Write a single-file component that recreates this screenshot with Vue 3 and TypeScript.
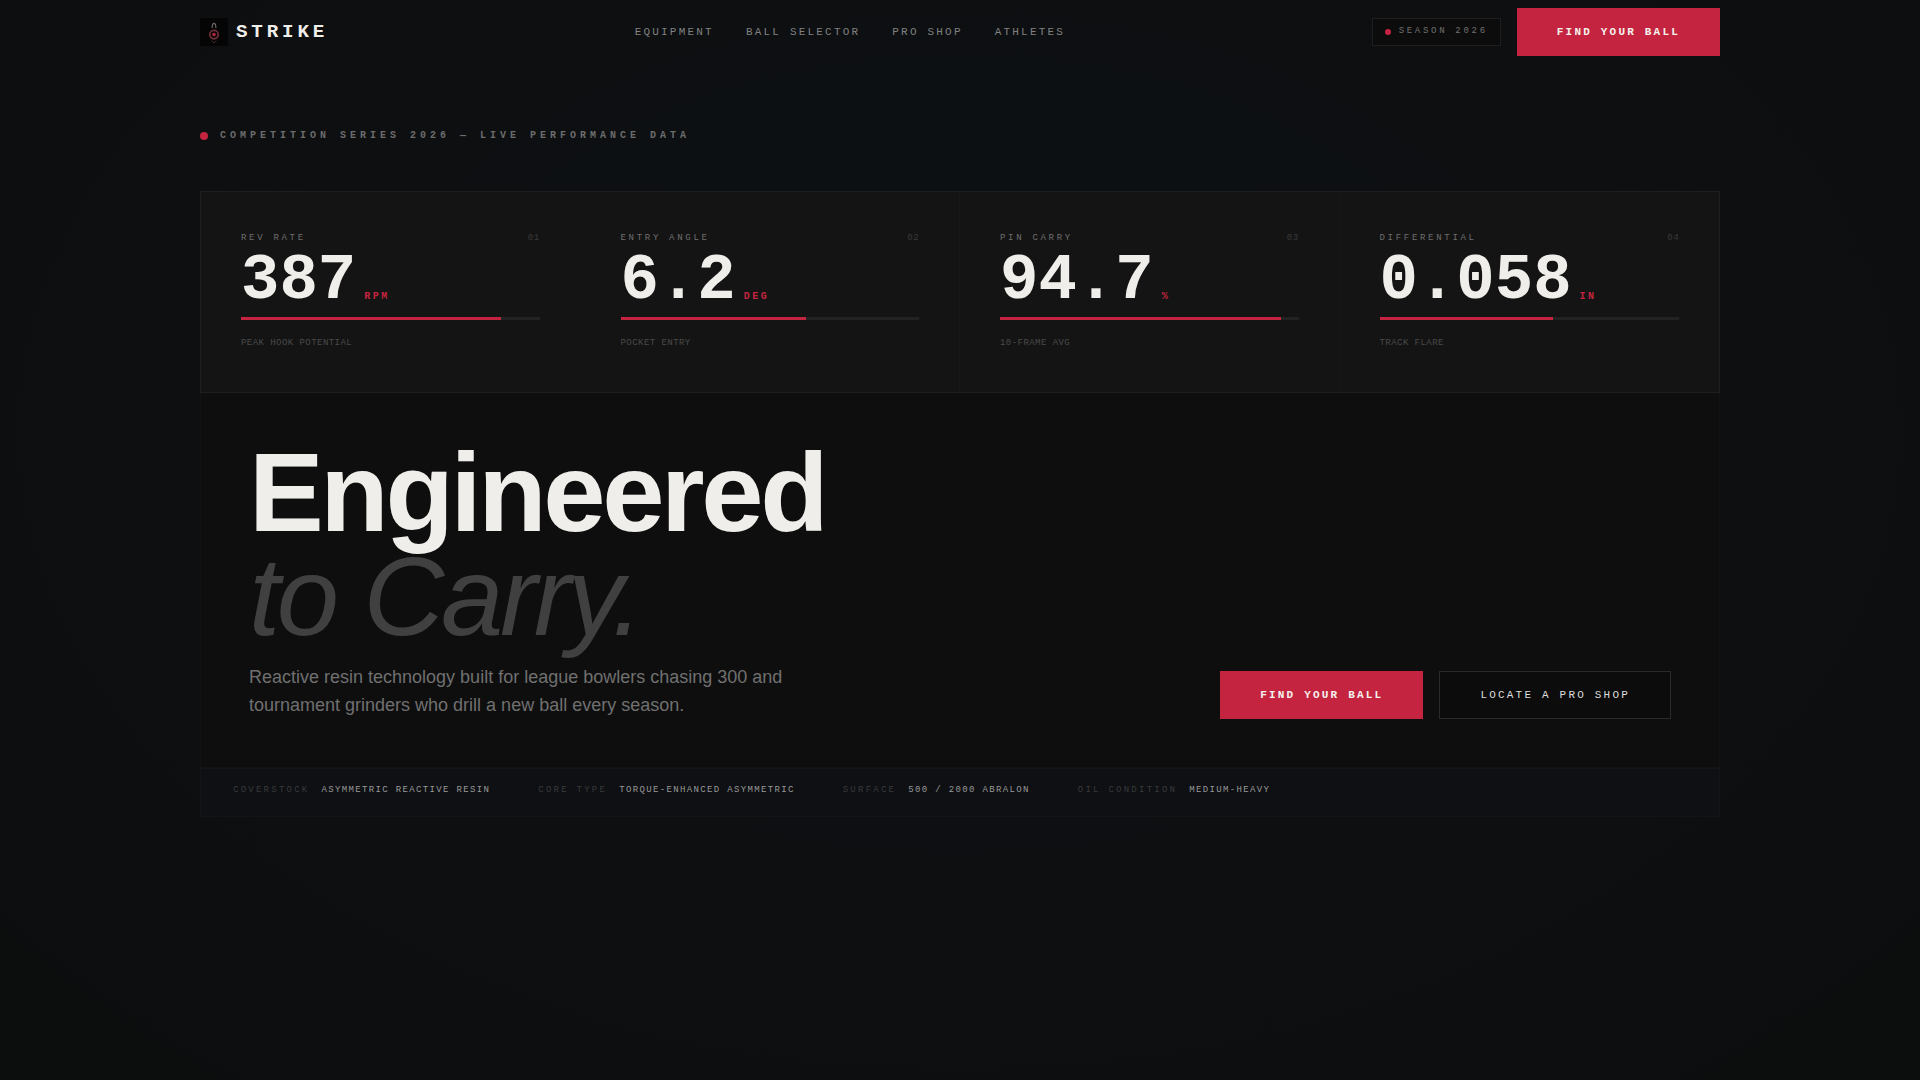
<template>
  <div class="page">
    <header class="nav">
      <div class="brand">
        <span class="logo">
          <svg width="28" height="28" viewBox="0 0 28 28" fill="none">
            <path d="M12 10 L12.6 6.4 Q14 4.4 15.4 6.4 L16 10" stroke="#6f6666" stroke-width="1.2" />
            <circle cx="14" cy="16.6" r="4.2" stroke="#6b2d36" stroke-width="1.8" />
            <circle cx="14" cy="16.6" r="1.8" fill="#b0233a" />
            <path d="M11.6 22.6 L14 25 L16.4 22.6" stroke="#3f2428" stroke-width="1" />
          </svg>
        </span>
        <span class="wordmark">STRIKE</span>
      </div>
      <nav class="links">
        <a v-for="link in links" :key="link">{{ link }}</a>
      </nav>
      <div class="nav-right">
        <span class="season"><i class="season-dot"></i><span class="season-text">SEASON 2026</span></span>
        <button class="btn primary">FIND YOUR BALL</button>
      </div>
    </header>

    <div class="eyebrow">
      <i class="eyebrow-dot"></i>
      <span>COMPETITION SERIES 2026 — LIVE PERFORMANCE DATA</span>
    </div>

    <section class="stats">
      <div v-for="stat in stats" :key="stat.index" class="stat">
        <div class="stat-head">
          <span>{{ stat.label }}</span>
          <span class="stat-index">{{ stat.index }}</span>
        </div>
        <div class="stat-value">
          <span class="stat-number">{{ stat.value }}</span>
          <span class="stat-unit">{{ stat.unit }}</span>
        </div>
        <div class="track">
          <div class="fill" :style="{ width: stat.percent + '%' }"></div>
        </div>
        <div class="stat-note">{{ stat.note }}</div>
      </div>
    </section>

    <section class="hero">
      <h1 class="title">Engineered<em>to Carry.</em></h1>
      <div class="hero-row">
        <p class="lede">
          Reactive resin technology built for league bowlers chasing 300 and
          tournament grinders who drill a new ball every season.
        </p>
        <div class="actions">
          <button class="btn primary">FIND YOUR BALL</button>
          <button class="btn ghost">LOCATE A PRO SHOP</button>
        </div>
      </div>
    </section>

    <footer class="specs">
      <div v-for="spec in specs" :key="spec.label" class="spec">
        <span class="spec-label">{{ spec.label }}</span>
        <span class="spec-value">{{ spec.value }}</span>
      </div>
    </footer>
  </div>
</template>

<script setup lang="ts">
const links: string[] = ['EQUIPMENT', 'BALL SELECTOR', 'PRO SHOP', 'ATHLETES']

const stats = [
  { index: '01', label: 'REV RATE', value: '387', unit: 'RPM', percent: 87, note: 'PEAK HOOK POTENTIAL' },
  { index: '02', label: 'ENTRY ANGLE', value: '6.2', unit: 'DEG', percent: 62, note: 'POCKET ENTRY' },
  { index: '03', label: 'PIN CARRY', value: '94.7', unit: '%', percent: 94, note: '10-FRAME AVG' },
  { index: '04', label: 'DIFFERENTIAL', value: '0.058', unit: 'IN', percent: 58, note: 'TRACK FLARE' }
]

const specs = [
  { label: 'COVERSTOCK', value: 'ASYMMETRIC REACTIVE RESIN' },
  { label: 'CORE TYPE', value: 'TORQUE-ENHANCED ASYMMETRIC' },
  { label: 'SURFACE', value: '500 / 2000 ABRALON' },
  { label: 'OIL CONDITION', value: 'MEDIUM-HEAVY' }
]
</script>

<style>
html,
body {
  margin: 0;
  background: #0d0f11;
}
</style>

<style scoped>
.page {
  box-sizing: border-box;
  width: 1920px;
  height: 1080px;
  padding: 0 200px;
  overflow: hidden;
  font-family: "Liberation Mono", monospace;
  background: radial-gradient(ellipse at 50% 40%, #0d1114 0%, #0d0f11 55%, #0c0e0e 100%);
}

.nav {
  height: 64px;
  display: flex;
  justify-content: space-between;
  align-items: center;
}

.brand {
  display: flex;
  align-items: center;
  gap: 8px;
}

.logo {
  width: 28px;
  height: 28px;
  background: #050505;
  display: block;
}

.logo svg {
  display: block;
}

.wordmark {
  font-size: 19.2px;
  font-weight: 700;
  letter-spacing: 0.2em;
  color: #f0eeea;
}

.links {
  display: flex;
  gap: 32px;
}

.links a {
  font-size: 11px;
  letter-spacing: 0.2em;
  color: #808080;
}

.nav-right {
  display: flex;
  align-items: center;
  gap: 16px;
}

.season {
  display: flex;
  align-items: center;
  gap: 8px;
  box-sizing: border-box;
  height: 28px;
  padding: 0 12px;
  font-size: 9px;
  letter-spacing: 0.3em;
  color: #707070;
  background: #0c0c0c;
  border: 1px solid #1e1e1e;
}

.season-text {
  margin-top: -2px;
}

.season-dot {
  width: 6px;
  height: 6px;
  border-radius: 50%;
  background: #c4243f;
}

.btn {
  box-sizing: border-box;
  height: 48px;
  padding: 0 40px;
  border: none;
  font-family: "Liberation Mono", monospace;
  font-size: 11px;
  letter-spacing: 0.2em;
}

.primary {
  background: #c4243f;
  color: #f5f2ee;
  font-weight: 700;
}

.ghost {
  background: #0c0c0c;
  color: #ddd;
  border: 1px solid #2a2a2a;
}

.eyebrow {
  display: flex;
  align-items: center;
  gap: 12px;
  margin-top: 65px;
  height: 12px;
  font-size: 10px;
  font-weight: 700;
  letter-spacing: 0.4em;
  color: #6c6c6c;
}

.eyebrow-dot {
  width: 8px;
  height: 8px;
  margin-top: 2px;
  border-radius: 50%;
  background: #c4243f;
}

.stats {
  margin-top: 50px;
  display: grid;
  grid-template-columns: repeat(4, 1fr);
  background: #141414;
  border: 1px solid #1e1e1e;
}

.stat {
  box-sizing: border-box;
  height: 200px;
  padding: 41px 40px 0;
  border-right: 1px solid #181818;
}

.stat:first-child {
  border-right-color: #141414;
}

.stat:last-child {
  border-right: none;
}

.stat-head {
  display: flex;
  justify-content: space-between;
  font-size: 9px;
  line-height: 10px;
  letter-spacing: 0.3em;
  color: #6e6e6e;
}

.stat-index {
  letter-spacing: 0.05em;
  color: #3a3a3a;
}

.stat-value {
  display: flex;
  align-items: baseline;
  gap: 8px;
  margin-top: 6px;
  height: 64px;
}

.stat-number {
  font-size: 64px;
  line-height: 64px;
  font-weight: 700;
  color: #f0eeea;
}

.stat-unit {
  font-size: 10px;
  font-weight: 700;
  letter-spacing: 0.25em;
  color: #c4243f;
  transform: translateY(1px);
}

.track {
  margin-top: 4px;
  height: 3px;
  background: #222;
}

.fill {
  height: 100%;
  background: #c4243f;
}

.stat-note {
  margin-top: 18px;
  font-size: 9px;
  line-height: 10px;
  letter-spacing: 0.05em;
  color: #4a4a4a;
}

.hero {
  box-sizing: border-box;
  height: 375px;
  padding: 48px 48px 0;
  background: #0e0e0e;
  border: 1px solid #131313;
  border-top: none;
  display: flex;
  flex-direction: column;
}

.title {
  margin: 0;
  font-family: "Liberation Sans", sans-serif;
  font-size: 112px;
  line-height: 104px;
  font-weight: 700;
  letter-spacing: -0.03em;
  color: #f0eeea;
}

.title em {
  display: block;
  font-weight: 400;
  color: #404040;
}

.hero-row {
  display: flex;
  justify-content: space-between;
  align-items: flex-end;
  margin-top: 14px;
}

.lede {
  margin: 0;
  width: 560px;
  font-family: "Liberation Sans", sans-serif;
  font-size: 18px;
  line-height: 28px;
  color: #707070;
}

.actions {
  display: flex;
  gap: 16px;
}

.specs {
  box-sizing: border-box;
  height: 49px;
  padding: 0 32px 5px;
  display: flex;
  align-items: center;
  gap: 48px;
  background: #0e1013;
  border: 1px solid #131517;
  border-top-color: #14161a;
}

.spec {
  display: flex;
  gap: 12px;
  font-size: 9px;
}

.spec-label {
  letter-spacing: 0.25em;
  color: #3a3a3a;
}

.spec-value {
  letter-spacing: 0.15em;
  color: #999;
}
</style>
